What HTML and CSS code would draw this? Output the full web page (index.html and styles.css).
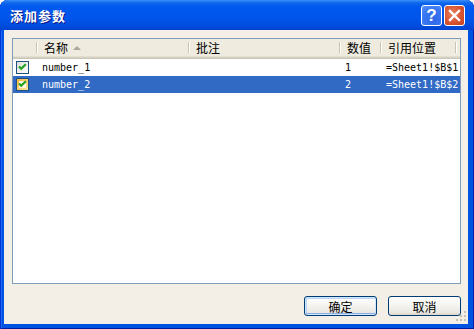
FILE: index.html
```html
<!DOCTYPE html>
<html>
<head>
<meta charset="utf-8">
<link rel="stylesheet" href="styles.css">
</head>
<body>
<div class="window">
  <div class="titlebar">
    <span class="title">添加参数</span>
    <div class="caps">
      <span class="cap help">?</span>
      <span class="cap close">
        <svg width="13" height="13" viewBox="0 0 13 13"><path d="M2 2 L11 11 M11 2 L2 11" stroke="#fff" stroke-width="2.4" stroke-linecap="square"/></svg>
      </span>
    </div>
  </div>
  <div class="client">
    <div class="list">
      <div class="grid header">
        <div class="hcell"><i class="sep"></i></div>
        <div class="hcell">名称<b class="arrow"></b><i class="sep"></i></div>
        <div class="hcell">批注<i class="sep"></i></div>
        <div class="hcell">数值<i class="sep"></i></div>
        <div class="hcell">引用位置<i class="sep"></i></div>
        <div class="hcell"></div>
      </div>
      <div class="grid row">
        <div class="ccell">
          <svg width="13" height="13" viewBox="0 0 13 13">
            <defs><linearGradient id="g1" x1="0" y1="0" x2="1" y2="1"><stop offset="0" stop-color="#DCDCD7"/><stop offset="1" stop-color="#FFFFFF"/></linearGradient></defs>
            <rect x="0.5" y="0.5" width="12" height="12" fill="url(#g1)" stroke="#1C5180"/>
            <path d="M3 5.5 L5.2 7.8 L9.8 3.2" fill="none" stroke="#21A121" stroke-width="2.2"/>
          </svg>
        </div>
        <div class="cell">number_1</div>
        <div class="cell"></div>
        <div class="cell">1</div>
        <div class="cell">=Sheet1!$B$1</div>
        <div class="cell"></div>
      </div>
      <div class="grid row selected">
        <div class="ccell">
          <svg width="13" height="13" viewBox="0 0 13 13">
            <defs><linearGradient id="g2" x1="0" y1="0" x2="1" y2="1"><stop offset="0" stop-color="#F9B33C"/><stop offset="1" stop-color="#FEE79A"/></linearGradient></defs>
            <rect x="0.5" y="0.5" width="12" height="12" fill="#fff" stroke="#1C5180"/>
            <rect x="1" y="1" width="11" height="11" fill="url(#g2)"/>
            <rect x="3" y="3" width="7" height="7" fill="#FDF6E4"/>
            <path d="M3 5.5 L5.2 7.8 L9.8 3.2" fill="none" stroke="#21A121" stroke-width="2.2"/>
          </svg>
        </div>
        <div class="cell">number_2</div>
        <div class="cell"></div>
        <div class="cell">2</div>
        <div class="cell">=Sheet1!$B$2</div>
        <div class="cell"></div>
      </div>
    </div>
    <div class="buttons">
      <span class="btn default">确定</span>
      <span class="btn">取消</span>
    </div>
    <svg class="grip" width="12" height="12" viewBox="0 0 12 12">
      <g fill="#C6C2B2">
        <rect x="8" y="0" width="2" height="2"/>
        <rect x="4" y="4" width="2" height="2"/><rect x="8" y="4" width="2" height="2"/>
        <rect x="0" y="8" width="2" height="2"/><rect x="4" y="8" width="2" height="2"/><rect x="8" y="8" width="2" height="2"/>
      </g>
    </svg>
  </div>
</div>
</body>
</html>
```

FILE: styles.css
```css
* { box-sizing: border-box; }
html, body { margin: 0; padding: 0; background: #fff; }
body { font-family: "Noto Sans CJK SC", "Liberation Sans", sans-serif; font-size: 12px; }

.window {
  width: 474px;
  height: 329px;
  display: flex;
  flex-direction: column;
  background: #0053E1;
  border-radius: 8px 8px 0 0;
  box-shadow: inset 1px 0 0 #0831D9, inset -1px 0 0 #001EA0, inset 0 -1px 0 #001EA0, inset 2px 0 0 #166AEE;
}

.titlebar {
  height: 30px;
  flex: none;
  display: flex;
  align-items: center;
  padding: 0 9px 0 10px;
  border-radius: 8px 8px 0 0;
  background: linear-gradient(#3C8FF8 0, #0E67EC 3px, #0058EE 7px, #0055EB 18px, #004CDD 26px, #0043CF 30px);
}
.title {
  color: #fff;
  font-weight: bold;
  font-size: 13px;
  text-shadow: 1px 1px 0 #0A1883;
  letter-spacing: 1px;
}
.caps { margin-left: auto; display: flex; gap: 2px; padding-top: 1px; }
.cap {
  width: 21px;
  height: 21px;
  border: 1px solid #fff;
  border-radius: 3px;
  display: flex;
  align-items: center;
  justify-content: center;
}
.help {
  background: radial-gradient(circle at 60% 70%, #2D66E8 0, #3A78F2 60%, #5A92F8 100%);
  color: #fff;
  font-family: "Liberation Sans", sans-serif;
  font-weight: bold;
  font-size: 17px;
}
.close {
  background: radial-gradient(circle at 40% 40%, #E7805E 0, #DA5432 55%, #C23F1C 100%);
}

.client {
  flex: 1;
  position: relative;
  margin: 0 6px 5px 4px;
  background: #F3EEE6;
  padding: 8px 7px 0 8px;
  display: flex;
  flex-direction: column;
}

.list {
  height: 246px;
  background: #fff;
  border: 1px solid #7F9DB9;
}
.grid {
  display: grid;
  grid-template-columns: 25px 152px 151px 41px 75px 1fr;
}
.header {
  height: 20px;
  background: #EFEBDF;
  box-shadow: inset 0 -1px 0 #CBC7B8, inset 0 -2px 0 #D6D2C2, inset 0 -3px 0 #E2DED2;
}
.hcell {
  display: flex;
  align-items: center;
  height: 17px;
  padding-left: 6px;
  color: #000;
  font-size: 12px;
}
.sep {
  margin-left: auto;
  width: 1px;
  height: 11px;
  background: #C7C5B2;
  box-shadow: 1px 0 0 #fff;
  margin-right: 1px;
}
.arrow {
  width: 0;
  height: 0;
  margin-left: 5px;
  margin-top: 1px;
  border-left: 4px solid transparent;
  border-right: 4px solid transparent;
  border-bottom: 4px solid #ACA899;
}
.row { height: 17px; }
.row .cell, .row .ccell { display: flex; align-items: center; }
.ccell { padding-left: 3px; }
.cell {
  padding-left: 4px;
  font-family: "DejaVu Sans Mono", monospace;
  font-size: 10px;
  color: #000;
  white-space: nowrap;
}
.selected { background: #316AC5; }
.selected .cell { color: #fff; }

.buttons {
  margin-top: 12px;
  display: flex;
  justify-content: flex-end;
  gap: 11px;
}
.btn {
  width: 73px;
  height: 20px;
  border: 1px solid #003C74;
  border-radius: 3px;
  background: linear-gradient(#FFFFFF 0, #F6F6F3 40%, #EAE8E1 85%, #D8D3C8 100%);
  display: flex;
  align-items: center;
  justify-content: center;
  font-size: 12px;
  color: #000;
}
.btn.default {
  box-shadow: inset 0 0 0 1px #CEE7FF, inset 0 -1px 0 1px #89ADE4, inset 1px 1px 0 1px #BCD4F6;
}
.grip { position: absolute; right: 0; bottom: 1px; }
```
